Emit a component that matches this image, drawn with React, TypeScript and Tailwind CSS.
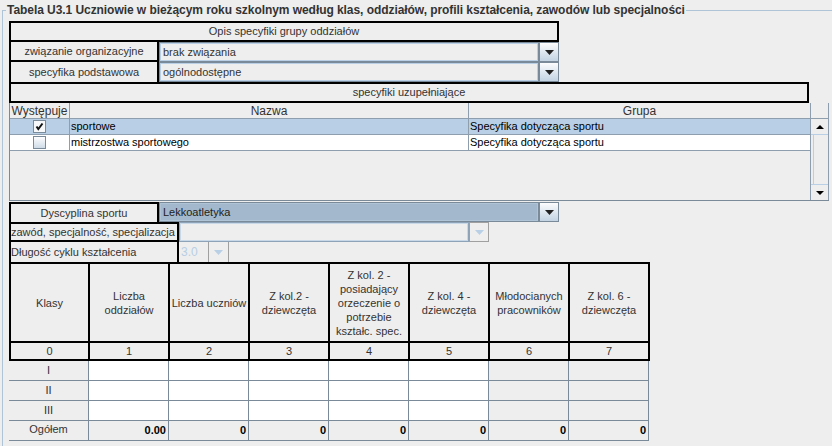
import React from "react";

const DownArrow = ({ color = "#000" }: { color?: string }) => (
  <svg width="9" height="5" viewBox="0 0 9 5">
    <polygon points="0,0 9,0 4.5,5" fill={color} />
  </svg>
);

const SmallArrow = ({ up }: { up?: boolean }) => (
  <svg width="8" height="4" viewBox="0 0 8 4">
    {up ? <polygon points="0,4 8,4 4,0" fill="#000" /> : <polygon points="0,0 8,0 4,4" fill="#000" />}
  </svg>
);

const ArrowBtn = ({ disabled }: { disabled?: boolean }) =>
  disabled ? (
    <div className="w-[20px] h-full border border-[#a0a0a0] bg-[#eeeeee] flex items-center justify-center">
      <DownArrow color="#b8cfe5" />
    </div>
  ) : (
    <div className="w-[20px] h-full border border-[#7a8a99] bg-linear-to-b from-[#fbfcfd] to-[#c3d3e3] flex items-center justify-center">
      <DownArrow color="#222" />
    </div>
  );

const Check = ({ checked }: { checked?: boolean }) => (
  <div
    className={
      "w-[13px] h-[13px] border border-[#7a8a99] flex items-center justify-center " +
      (checked ? "bg-[#f6f8fa]" : "bg-linear-to-b from-[#fdfdfe] to-[#cfdbe7]")
    }
  >
    {checked && (
      <svg width="9" height="9" viewBox="0 0 9 9">
        <polyline points="1.5,4.5 3.3,7 7.5,1.5" fill="none" stroke="#111" strokeWidth="2" />
      </svg>
    )}
  </div>
);

const headers = [
  ["Klasy"],
  ["Liczba", "oddziałów"],
  ["Liczba uczniów"],
  ["Z kol.2 -", "dziewczęta"],
  ["Z kol. 2 -", "posiadający", "orzeczenie o", "potrzebie", "kształc. spec."],
  ["Z kol. 4 -", "dziewczęta"],
  ["Młodocianych", "pracowników"],
  ["Z kol. 6 -", "dziewczęta"],
];

export default function App() {
  const rows = ["I", "II", "III"];
  return (
    <div className="w-[832px] h-[446px] overflow-hidden bg-[#eeeeee] text-[11px] leading-none text-[#333333] font-['Liberation_Sans',Arial,sans-serif]">
      <div className="pt-[2px] pl-[2px]">
        <fieldset className="border-0 border-l border-t border-[#b0c4d8] h-[470px] min-w-0">
          <legend className="ml-[3px] px-[1px] text-[12px] font-bold leading-[16px] tracking-[-0.06px] text-[#333333]">
            Tabela U3.1 Uczniowie w bieżącym roku szkolnym według klas, oddziałów, profili kształcenia, zawodów lub specjalności
          </legend>
          <div className="pl-[6px] pt-[3px] flex flex-col">
            {/* Opis */}
            <div className="w-[550px] h-[21px] border-2 border-black flex items-center justify-center">
              Opis specyfiki grupy oddziałów
            </div>
            <div className="flex h-[20px]">
              <div className="w-[150px] border-x-2 border-b-2 border-black flex items-center justify-center">
                związanie organizacyjne
              </div>
              <div className="w-[400px] flex">
                <div className="flex-1 border border-[#7a8a99] shadow-[inset_0_0_0_1px_#b8cfe5] bg-[#eeeeee] flex items-center pl-[3px]">
                  brak związania
                </div>
                <ArrowBtn />
              </div>
            </div>
            <div className="flex h-[20px]">
              <div className="w-[150px] border-x-2 border-black flex items-center justify-center">
                specyfika podstawowa
              </div>
              <div className="w-[400px] flex">
                <div className="flex-1 border border-[#7a8a99] shadow-[inset_0_0_0_1px_#b8cfe5] bg-[#eeeeee] flex items-center pl-[3px]">
                  ogólnodostępne
                </div>
                <ArrowBtn />
              </div>
            </div>
            <div className="w-[800px] h-[21px] border-2 border-black flex items-center justify-center">
              specyfiki uzupełniające
            </div>

            {/* specyfiki table */}
            <div className="flex w-[820px] h-[98px] border-l border-b border-[#7a8a99]">
              <div className="w-[800px] flex flex-col">
                <div className="flex h-[16px] text-[12px] text-[#333333]">
                  <div className="w-[60px] border-r border-b border-[#8e9eae] flex items-center justify-center">Występuje</div>
                  <div className="w-[399px] border-r border-b border-[#8e9eae] flex items-center justify-center">Nazwa</div>
                  <div className="flex-1 border-b border-[#8e9eae] flex items-center justify-center">Grupa</div>
                </div>
                <div className="flex h-[16px] bg-[#b8cfe5] text-black">
                  <div className="w-[60px] border-r border-b border-[#8e9eae] flex items-center justify-center">
                    <Check checked />
                  </div>
                  <div className="w-[399px] border-r border-b border-[#8e9eae] flex items-center pl-[1px]">sportowe</div>
                  <div className="flex-1 border-b border-[#8e9eae] flex items-center pl-[1px]">Specyfika dotycząca sportu</div>
                </div>
                <div className="flex h-[16px] bg-white text-black">
                  <div className="w-[60px] border-r border-b border-[#8e9eae] flex items-center justify-center">
                    <Check />
                  </div>
                  <div className="w-[399px] border-r border-b border-[#8e9eae] flex items-center pl-[1px]">mistrzostwa sportowego</div>
                  <div className="flex-1 border-b border-[#8e9eae] flex items-center pl-[1px]">Specyfika dotycząca sportu</div>
                </div>
              </div>
              <div className="w-[19px] flex flex-col border-l border-r border-[#8e9eae]">
                <div className="h-[16px] border-b border-[#8e9eae]" />
                <div className="h-[16px] flex items-center justify-center border-b border-[#b8cfe5]">
                  <SmallArrow up />
                </div>
                <div className="flex-1 ml-[2px] border-l border-[#b8cfe5]" />
                <div className="h-[16px] flex items-center justify-center border-t border-[#b8cfe5]">
                  <SmallArrow />
                </div>
              </div>
            </div>

            {/* Dyscyplina */}
            <div className="flex h-[20px] mt-[1px]">
              <div className="w-[150px] border-x-2 border-t-2 border-black flex items-center justify-center">
                Dyscyplina sportu
              </div>
              <div className="w-[400px] flex">
                <div className="flex-1 border border-[#7a8a99] shadow-[inset_0_0_0_1px_#b0c4d8] bg-[#a3b8cc] flex items-center pl-[3px] text-[#222]">
                  Lekkoatletyka
                </div>
                <ArrowBtn />
              </div>
            </div>
            <div className="flex h-[20px]">
              <div className="w-[170px] border-2 border-black flex items-center">
                zawód, specjalność, specjalizacja
              </div>
              <div className="w-[310px] flex">
                <div className="flex-1 border border-[#8fa3b8] shadow-[inset_0_0_0_1px_#c8d8e8] bg-[#eeeeee]" />
                <ArrowBtn disabled />
              </div>
            </div>
            <div className="flex h-[20px]">
              <div className="w-[170px] border-x-2 border-black flex items-center">
                Długość cyklu kształcenia
              </div>
              <div className="w-[50px] flex">
                <div className="flex-1 border-r border-[#a0a0a0] bg-[#eeeeee] flex items-center pl-[2px] text-[12px] text-[#b8cfe5]">
                  3.0
                </div>
                <div className="w-[20px] h-full border-r border-[#a0a0a0] bg-[#eeeeee] flex items-center justify-center">
                  <DownArrow color="#b8cfe5" />
                </div>
              </div>
            </div>

            {/* big table header */}
            <div className="w-[641px] grid grid-cols-[77px_repeat(7,78px)] gap-[2px] p-[2px] bg-black">
              {headers.map((h, i) => (
                <div key={i} className="h-[77px] bg-[#eeeeee] flex flex-col items-center justify-center text-center leading-[14px]">
                  {h.map((l, j) => (
                    <span key={j}>{l}</span>
                  ))}
                </div>
              ))}
              {headers.map((_, i) => (
                <div key={"n" + i} className="h-[16px] bg-[#eeeeee] flex items-center justify-center">
                  {i}
                </div>
              ))}
            </div>
            <div className="w-[640px] grid grid-cols-[repeat(8,79px)] gap-px bg-[#7a8a99] pr-px pb-px">
              {rows.map((r) => (
                <React.Fragment key={r}>
                  <div className="h-[19px] bg-[#eeeeee] flex items-center justify-center">{r}</div>
                  {[1, 2, 3, 4, 5].map((c) => (
                    <div key={c} className="h-[19px] bg-white" />
                  ))}
                  <div className="h-[19px] bg-[#eeeeee]" />
                  <div className="h-[19px] bg-[#eeeeee]" />
                </React.Fragment>
              ))}
              <div className="h-[19px] bg-[#eeeeee] flex items-center justify-center pb-[3px]">Ogółem</div>
              {["0.00", "0", "0", "0", "0", "0", "0"].map((v, i) => (
                <div key={"t" + i} className="h-[19px] bg-[#eeeeee] flex items-center justify-end pr-[2px] font-bold text-black text-[11px]">
                  {v}
                </div>
              ))}
            </div>
          </div>
        </fieldset>
      </div>
    </div>
  );
}
